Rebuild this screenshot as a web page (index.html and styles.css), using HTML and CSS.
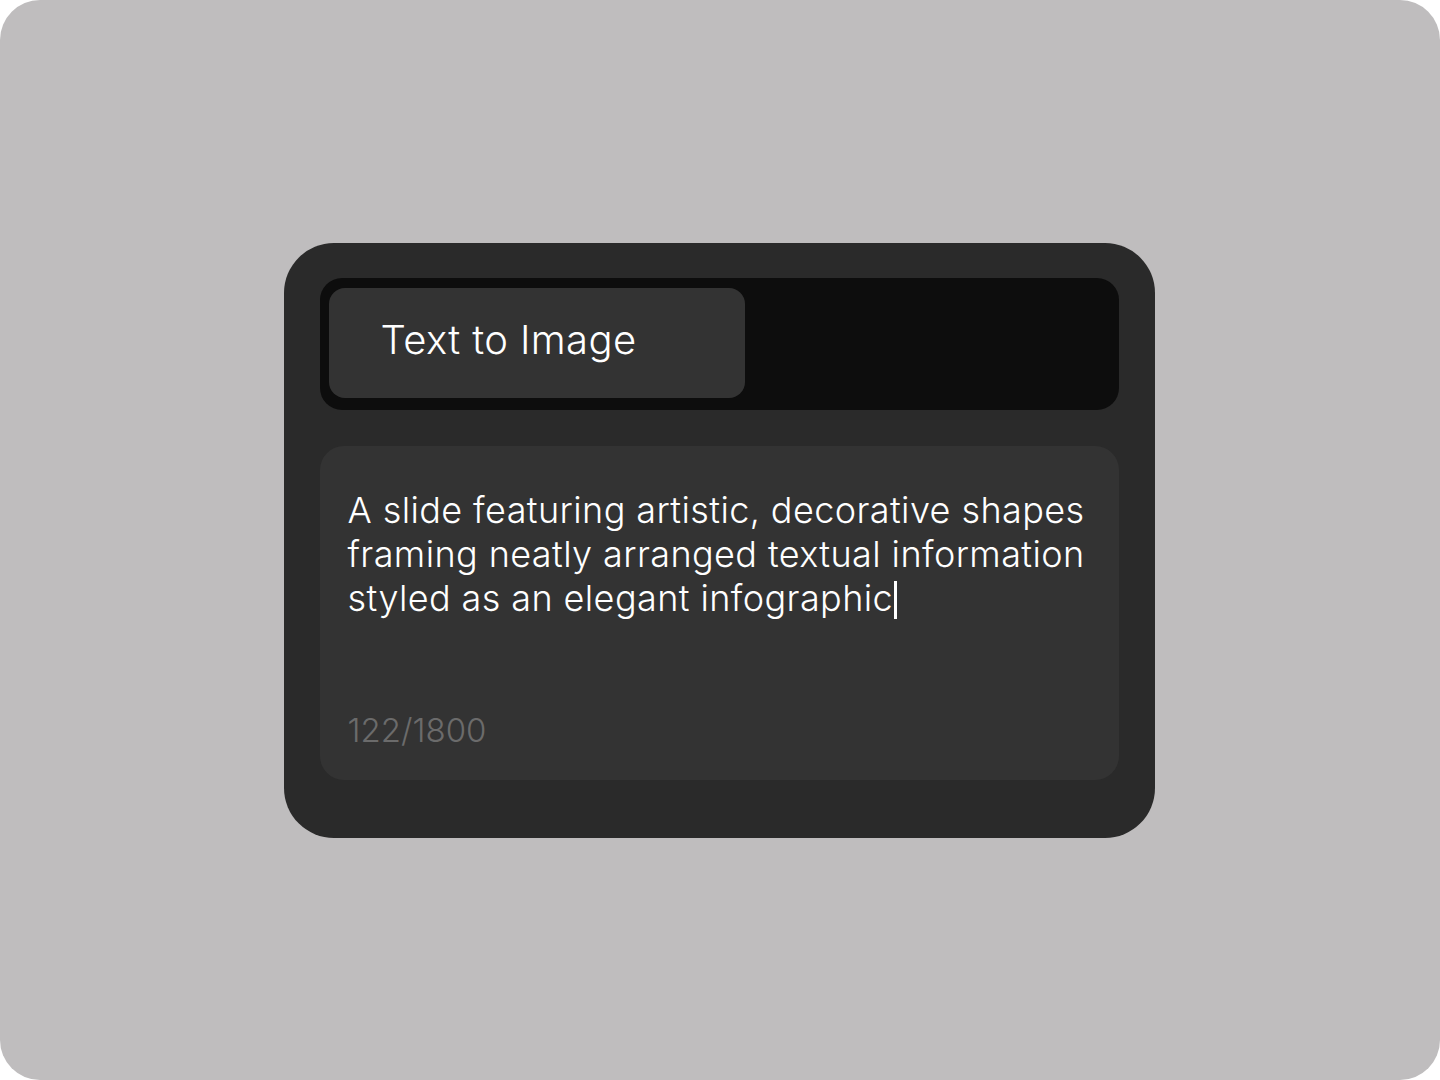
FILE: index.html
```html
<!DOCTYPE html>
<html lang="en">
<head>
<meta charset="utf-8">
<title>Text to Image</title>
<link rel="stylesheet" href="styles.css">
</head>
<body>
<div class="stage">
  <div class="card">
    <div class="tabs">
      <div class="tab active">Text to Image</div>
    </div>
    <div class="prompt">
      <div class="prompt-text">A slide featuring artistic, decorative shapes framing neatly arranged textual information styled as an elegant infographic<span class="caret"></span></div>
      <div class="counter">122/1800</div>
    </div>
  </div>
</div>
</body>
</html>
```
FILE: styles.css
```css
html, body {
  margin: 0;
  padding: 0;
  background: #ffffff;
}
body {
  width: 1440px;
  height: 1080px;
  font-family: Inter, "Noto Sans", "Liberation Sans", sans-serif;
}
.stage {
  width: 1440px;
  height: 1080px;
  background: #bfbdbe;
  border-radius: 40px;
  display: flex;
  align-items: center;
  justify-content: center;
  padding-right: 2px;
  box-sizing: border-box;
}
.card {
  width: 799px;
  padding: 35px 36px 58px 36px;
  background: #2a2a2a;
  border-radius: 50px;
  display: flex;
  flex-direction: column;
  gap: 36px;
}
.tabs {
  background: #0d0d0d;
  border-radius: 22px;
  padding: 10px 9px 12px 9px;
  display: flex;
}
.tab {
  width: 416px;
  height: 110px;
  box-sizing: border-box;
  border-radius: 16px;
  display: flex;
  align-items: center;
  padding-left: 52px;
  padding-bottom: 6px;
  font-size: 40px;
  font-weight: 300;
  letter-spacing: 0.4px;
  color: #ffffff;
}
.tab.active {
  background: #333333;
}
.prompt {
  background: #333333;
  border-radius: 24px;
  padding: 42px 28px 32px 28px;
  display: flex;
  flex-direction: column;
  height: 334px;
  box-sizing: border-box;
}
.prompt-text {
  font-size: 36px;
  font-weight: 300;
  letter-spacing: 0.4px;
  line-height: 44px;
  color: #ffffff;
  flex: 1;
}
.caret {
  display: inline-block;
  width: 3px;
  height: 38px;
  background: #ffffff;
  vertical-align: -8px;
  margin-left: 1px;
}
.counter {
  font-size: 33px;
  font-weight: 300;
  line-height: 36px;
  color: #6b6b6b;
}
```
